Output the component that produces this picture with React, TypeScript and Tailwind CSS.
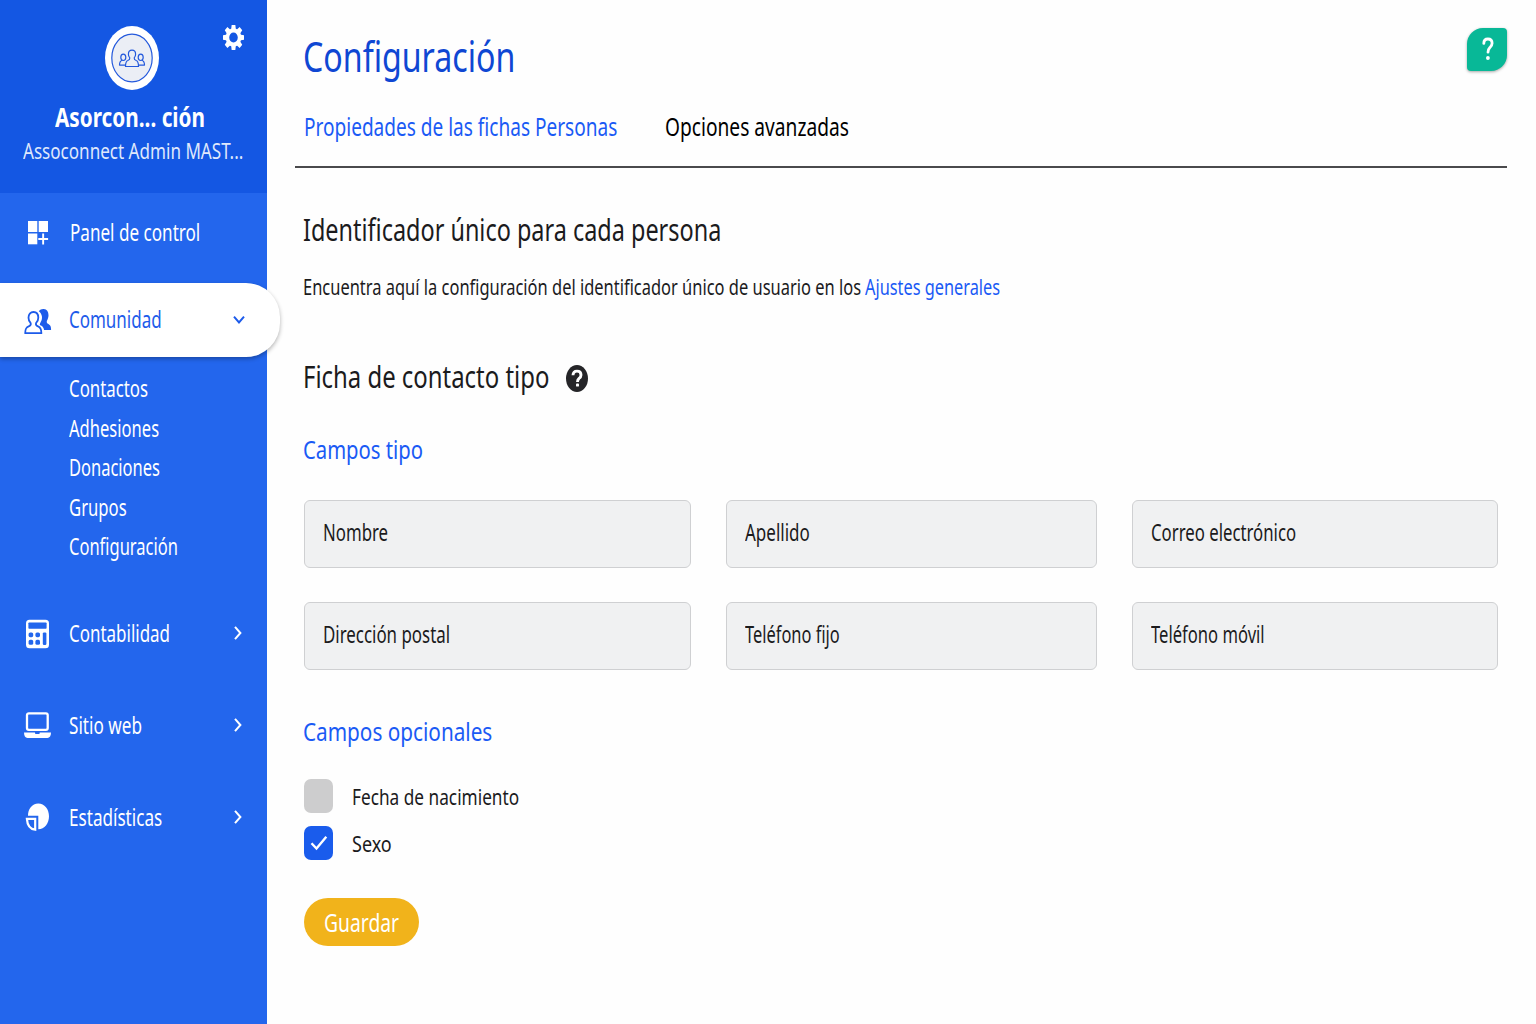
import { useLayoutEffect, useRef, useState } from 'react';
import type { ReactNode } from 'react';

// Condenses a line of text horizontally so that it fills the given width
function Fit({ width, className = '', children }: { width: number; className?: string; children: ReactNode }) {
  const ref = useRef<HTMLSpanElement>(null);
  const [scale, setScale] = useState(0.8);

  useLayoutEffect(() => {
    if (ref.current) setScale(width / ref.current.offsetWidth);
  }, [width]);

  return (
    <span className={`block shrink-0 ${className}`} style={{ width }}>
      <span
        ref={ref}
        className="inline-block origin-left whitespace-nowrap"
        style={{ transform: `scaleX(${scale})` }}
      >
        {children}
      </span>
    </span>
  );
}

function GearIcon() {
  return (
    <svg width="21" height="25" viewBox="0 0 24 24" preserveAspectRatio="none" fill="currentColor">
      {[0, 45, 90, 135].map((angle) => (
        <path
          key={angle}
          transform={`rotate(${angle} 12 12)`}
          d="M9.900 0h4.200l.7 5H9.200zM9.900 24h4.200l.7-5H9.200z"
        />
      ))}
      <circle cx="12" cy="12" r="6.900" fill="none" stroke="currentColor" strokeWidth="4" />
    </svg>
  );
}

function Logo() {
  return (
    <svg width="54" height="64" viewBox="0 0 54 64" fill="none">
      <ellipse cx="27" cy="32" rx="27" ry="32" fill="#fff" />
      <ellipse cx="27" cy="32" rx="20.200" ry="23.800" fill="#ebeef5" stroke="#2459dc" strokeWidth="1.200" />
      <g stroke="#2459dc" strokeWidth="1.200" strokeLinejoin="round">
        <ellipse cx="18.300" cy="31.300" rx="2.500" ry="3.200" />
        <path d="M17.200 34.300c-1.800.6-2.700 1.700-2.700 4.800h5.500" />
        <ellipse cx="35.700" cy="31.300" rx="2.500" ry="3.200" />
        <path d="M36.800 34.300c1.800.6 2.700 1.700 2.700 4.800H34" />
        <path
          d="M27 24.200c-2.300 0-3.600 1.700-3.600 4 0 1.500.5 2.700 1.400 3.600.2 1.500-.6 2.100-2 2.700-1.600.6-2.300 2-2.300 6h13c0-4-.7-5.400-2.300-6-1.400-.6-2.200-1.200-2-2.700.9-.9 1.400-2.100 1.400-3.600 0-2.300-1.300-4-3.600-4z"
          fill="#ebeef5"
        />
      </g>
    </svg>
  );
}

function DashboardIcon() {
  return (
    <svg width="28" height="28" viewBox="0 0 28 28" fill="currentColor">
      <rect x="4" y="3" width="9.300" height="11" />
      <rect x="14.700" y="3" width="9.300" height="11" />
      <rect x="4" y="15.500" width="9.300" height="10.800" />
      <path d="M18.200 15.500h1.900v4.600h4V22h-4v4.500h-1.900V22h-3.900v-1.900h3.900z" />
    </svg>
  );
}

function PeopleIcon() {
  return (
    <svg className="mt-[3px]" width="28" height="28" viewBox="0 0 28 28" fill="none">
      <path
        d="M14.800 3.300C16 1.600 18 .9 19.800 1.100c3 .3 4.700 2.600 4.700 6.200 0 2.200-.8 4.200-1.700 5.600-.2 1.700.2 2.400 1.600 3.100 2 1.100 2.700 2.400 2.700 6h-7c-.5-2.900-1.700-3.900-4.300-5 .2-1.300.4-2 .9-2.900 2.300-3.700 1.600-8-1.900-10.800z"
        fill="currentColor"
      />
      <path
        d="M9.500 4c-3.100 0-5 2.400-5 5.700 0 2.300.8 4.100 2.200 5.500.4 1.700-.1 2.500-2 3.200C2 19.400 1.200 20.800 1.200 25.200h16.200c0-4.400-.8-5.800-3.400-6.800-1.900-.7-2.400-1.500-2-3.200 1.500-1.400 2.300-3.200 2.300-5.500C14.300 6.400 12.500 4 9.500 4z"
        stroke="currentColor"
        strokeWidth="1.800"
        strokeLinejoin="round"
      />
    </svg>
  );
}

function CalculatorIcon() {
  return (
    <svg className="mt-[2px]" width="28" height="30" viewBox="0 0 28 30">
      <rect x="2" y="0.700" width="23" height="28.600" rx="3.500" fill="currentColor" />
      <g fill="#2366ed">
        <rect x="4.400" y="3.400" width="18.200" height="6.400" rx="0.800" />
        <rect x="4.600" y="13.400" width="4.600" height="4.800" rx="1.600" />
        <rect x="4.600" y="20.800" width="4.600" height="5" rx="1.600" />
        <rect x="11.400" y="13.400" width="4.600" height="4.800" rx="1.600" />
        <rect x="11.400" y="20.800" width="4.600" height="5" rx="1.600" />
        <rect x="18.800" y="13.400" width="3.600" height="12.600" rx="1.200" />
      </g>
    </svg>
  );
}

function LaptopIcon() {
  return (
    <svg className="mt-px" width="28" height="28" viewBox="0 0 28 28">
      <rect x="3" y="2.300" width="20.700" height="16.600" rx="1.800" fill="none" stroke="currentColor" strokeWidth="2.300" />
      <path d="M0 21.600h11v.7c0 .4.400.6.800.6h3.200c.4 0 .7-.2.700-.6v-.7H27c0 3.200-1.300 5.400-3.500 5.400h-20C1.300 27 0 24.800 0 21.600z" fill="currentColor" />
    </svg>
  );
}

function PieIcon() {
  return (
    <svg className="mt-px" width="28" height="30" viewBox="0 0 28 30">
      <path d="M4 13.800C3.900 7 8 1.400 14.300 1.400 20.500 1.400 25 7 25 14.200S20.600 27 14.300 27.200V13.800z" fill="currentColor" />
      <path d="M2.900 16.900h8.300v10.800C6.400 27.200 3.300 23 2.900 16.900z" fill="none" stroke="currentColor" strokeWidth="2.200" />
    </svg>
  );
}

function ChevronRight() {
  return (
    <svg width="10" height="14" viewBox="0 0 10 14" fill="none" stroke="currentColor" strokeWidth="2">
      <path d="M2 0.800L7.400 7 2 13.200" />
    </svg>
  );
}

function ChevronDown() {
  return (
    <svg width="12" height="10" viewBox="0 0 12 10" fill="none" stroke="currentColor" strokeWidth="2">
      <path d="M1 1.700l5 5.700 5-5.700" />
    </svg>
  );
}

const communityLinks = [
  { label: 'Contactos', width: 79 },
  { label: 'Adhesiones', width: 90 },
  { label: 'Donaciones', width: 91 },
  { label: 'Grupos', width: 58 },
  { label: 'Configuración', width: 109 },
];

const sections = [
  { label: 'Contabilidad', width: 101, icon: <CalculatorIcon /> },
  { label: 'Sitio web', width: 73, icon: <LaptopIcon /> },
  { label: 'Estadísticas', width: 93, icon: <PieIcon /> },
];

const fields = [
  { label: 'Nombre', width: 65 },
  { label: 'Apellido', width: 65 },
  { label: 'Correo electrónico', width: 145 },
  { label: 'Dirección postal', width: 127 },
  { label: 'Teléfono fijo', width: 95 },
  { label: 'Teléfono móvil', width: 114 },
];

function Sidebar() {
  return (
    <aside className="w-[267px] h-full shrink-0 bg-[#2366ed] text-white text-[23px]">
      <div className="relative h-[193px] bg-[#1457e3] flex flex-col items-center pt-[26px]">
        <div className="absolute left-[223px] top-[25px]">
          <GearIcon />
        </div>
        <div className="-ml-[3px]">
          <Logo />
        </div>
        <div className="mt-[12px] -ml-[7px] h-[30px] leading-[30px] text-[26px] font-bold">
          <Fit width={150}>Asorcon... ción</Fit>
        </div>
        <div className="mt-[4px] -ml-px h-[30px] leading-[30px] text-[22.500px] text-[#dfe8fc]">
          <Fit width={220}>Assoconnect Admin MAST...</Fit>
        </div>
      </div>

      <nav>
        <a className="flex items-center h-[78px] pl-6">
          <DashboardIcon />
          <Fit width={130} className="ml-[18px]">Panel de control</Fit>
        </a>
        <a className="relative mt-[12px] flex items-center w-[280px] h-[74px] pl-6 rounded-r-[34px] bg-white text-[#1d5bea] shadow-[0_2px_4px_rgba(0,0,0,0.3)]">
          <PeopleIcon />
          <Fit width={93} className="ml-[17px] -mt-px">Comunidad</Fit>
          <span className="ml-auto mr-[35px]">
            <ChevronDown />
          </span>
        </a>
        <ul className="pt-[12px] pl-[69px]">
          {communityLinks.map((link) => (
            <li key={link.label} className="h-[39.600px] leading-[39.600px]">
              <Fit width={link.width}>{link.label}</Fit>
            </li>
          ))}
        </ul>
        <div className="mt-[20px]">
          {sections.map((section) => (
            <a key={section.label} className="flex items-center h-[92px] pl-6">
              {section.icon}
              <Fit width={section.width} className="ml-[17px]">{section.label}</Fit>
              <span className="ml-auto mr-[24px]">
                <ChevronRight />
              </span>
            </a>
          ))}
        </div>
      </nav>
    </aside>
  );
}

function Settings() {
  return (
    <main className="relative flex-1 pl-[37px] pt-[26px] text-[#1b1b1d]">
      <button className="absolute right-[29px] top-[28px] w-[40px] h-[43px] rounded-tl-[16px] rounded-br-[16px] rounded-tr-[4px] rounded-bl-[4px] bg-[#08b897] text-white flex items-center justify-center shadow-[0_1px_3px_rgba(0,0,0,0.35)]">
        <svg className="-mt-[2px] ml-px" width="12" height="24" viewBox="0 0 12 24" fill="none" stroke="currentColor" strokeWidth="2.800" strokeLinecap="round">
          <path d="M1.800 6.400C1.800 3.600 3.300 2 5.900 2s4.200 1.600 4.200 4.200c0 2-1 3.100-2.200 4.400C6.600 11.900 6 12.900 6 15.200" />
          <ellipse cx="5.900" cy="21" rx="1.900" ry="2.100" fill="currentColor" stroke="none" />
        </svg>
      </button>

      <h1 className="-ml-px h-[60px] leading-[60px] text-[42px] text-[#0f47d3]">
        <Fit width={212}>Configuración</Fit>
      </h1>

      <nav className="mt-[19px] -ml-[9px] mr-[29px] pl-[9px] h-[63px] flex items-start leading-[42px] text-[25px] border-b-2 border-[#4a4a4c]">
        <Fit width={313} className="text-[#1a5af5]">Propiedades de las fichas Personas</Fit>
        <Fit width={184} className="ml-[48px] text-black">Opciones avanzadas</Fit>
      </nav>

      <h2 className="mt-[41px] -ml-px h-[40px] leading-[40px] text-[31px]">
        <Fit width={418}>Identificador único para cada persona</Fit>
      </h2>
      <p className="mt-[22px] -ml-px h-[30px] leading-[32px] text-[22.500px] flex">
        <Fit width={558}>Encuentra aquí la configuración del identificador único de usuario en los</Fit>
        <Fit width={135} className="ml-[4px] text-[#1a5af5]">Ajustes generales</Fit>
      </p>

      <h2 className="mt-[55px] -ml-px h-[40px] leading-[42px] text-[31px] flex items-center">
        <Fit width={246}>Ficha de contacto tipo</Fit>
        <svg className="ml-[17px] mt-[4px]" width="22" height="27" viewBox="0 0 22 27">
          <ellipse cx="11" cy="13.500" rx="11" ry="13.500" fill="#252528" />
          <path d="M7 10.300C7.100 7.500 8.600 6.100 11 6.100s4 1.500 4 3.800c0 1.800-.9 2.700-2 3.600-1.100.8-1.500 1.600-1.500 3.400" fill="none" stroke="#fff" strokeWidth="2.900" />
          <rect x="10" y="18.600" width="3" height="3" rx="0.900" fill="#fff" />
        </svg>
      </h2>

      <h3 className="mt-[35px] h-[36px] leading-[36px] text-[26px] text-[#1a5af5]">
        <Fit width={120} className="-ml-px">Campos tipo</Fit>
      </h3>
      <div className="mt-[33px] grid grid-cols-[387px_371px_366px] gap-x-[35px] gap-y-[34px] text-[23px]">
        {fields.map((field) => (
          <div
            key={field.label}
            className="h-[68px] flex items-center pl-[18px] pb-[3px] rounded-[6px] border border-[#cfd0d2] bg-[#f0f1f2]"
          >
            <Fit width={field.width}>{field.label}</Fit>
          </div>
        ))}
      </div>

      <h3 className="mt-[43px] h-[36px] leading-[36px] text-[26px] text-[#1a5af5]">
        <Fit width={189} className="-ml-px">Campos opcionales</Fit>
      </h3>
      <div className="mt-[30px] flex flex-col gap-[13px] text-[22.500px]">
        <label className="flex items-center h-[34px]">
          <span className="w-[29px] h-[34px] rounded-[7px] bg-[#cdcdce]" />
          <Fit width={167} className="ml-[19px] mt-[2px]">Fecha de nacimiento</Fit>
        </label>
        <label className="flex items-center h-[34px]">
          <span className="w-[29px] h-[34px] rounded-[7px] bg-[#1a5cec] flex items-center justify-center">
            <svg width="18" height="16" viewBox="0 0 18 16" fill="none" stroke="#fff" strokeWidth="2.400">
              <path d="M1.500 8.200l5 5.300L16.300 1.800" />
            </svg>
          </span>
          <Fit width={40} className="ml-[19px] mt-[2px]">Sexo</Fit>
        </label>
      </div>

      <button className="mt-[38px] w-[115px] h-[48px] rounded-[24px] bg-[#f1b31b] text-white text-[26px] leading-[48px] flex justify-center">
        <Fit width={75}>Guardar</Fit>
      </button>
    </main>
  );
}

export default function App() {
  return (
    <div className="w-[1536px] h-[1024px] flex overflow-hidden bg-[#fefefe] font-['Noto_Sans',sans-serif]">
      <Sidebar />
      <Settings />
    </div>
  );
}
